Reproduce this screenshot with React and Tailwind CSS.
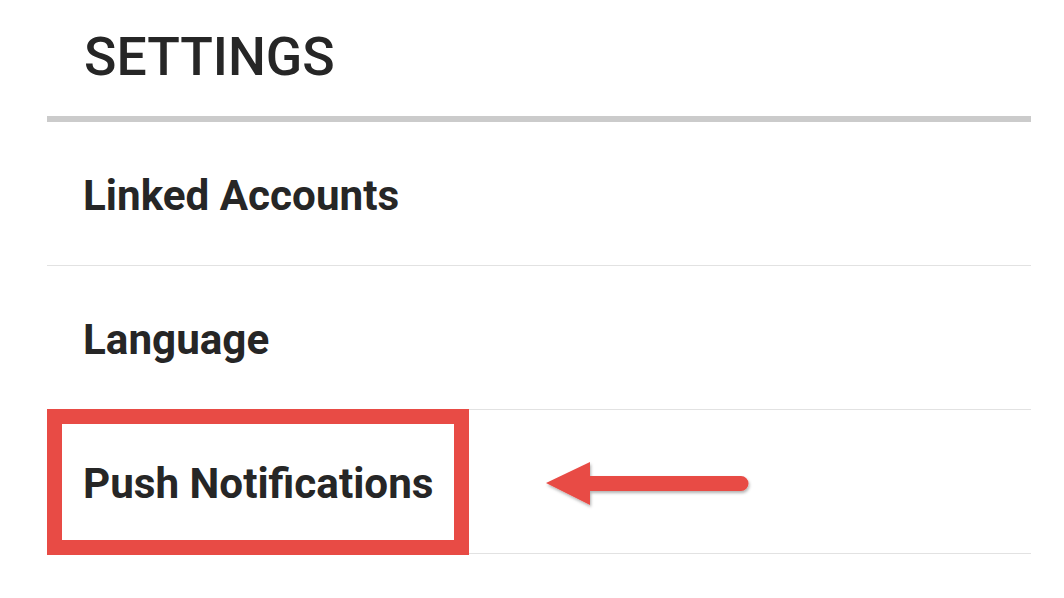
export default function App() {
  const rows = ["Linked Accounts", "Language", "Push Notifications"];
  return (
    <div className="relative w-[1064px] h-[598px] bg-white overflow-hidden" style={{ fontFamily: "Roboto, 'Liberation Sans', sans-serif" }}>
      <div className="ml-[47px] w-[984px]">
        <div className="h-[116px] flex items-center pl-[37px] pb-[2px]">
          <span className="text-[53.5px] leading-none text-[#262626] font-medium">SETTINGS</span>
        </div>
        <div className="h-[6px] bg-[#cbcbcb]" />
        {rows.map((r) => (
          <div key={r} className="h-[144px] border-b border-[#e2e2e2] flex items-center pl-[36px] pt-[6px]">
            <span className="text-[42.2px] leading-none font-bold text-[#262626]">{r}</span>
          </div>
        ))}
      </div>
      <div className="absolute left-[47px] top-[409px] w-[422px] h-[146px] border-[15px] border-[#e84b45]" />
      <svg className="absolute left-[536px] top-[452px]" width="230" height="64" viewBox="0 0 230 64">
        <defs>
          <filter id="sh" x="-10%" y="-30%" width="120%" height="160%">
            <feDropShadow dx="1" dy="2" stdDeviation="1.5" floodColor="#000" floodOpacity="0.3" />
          </filter>
        </defs>
        <g filter="url(#sh)" fill="#e84b45">
          <path d="M10 31 L54 10 L54 24 L205 24 A7.5 7.5 0 0 1 205 39 L54 39 L54 53 Z" />
        </g>
      </svg>
    </div>
  );
}
